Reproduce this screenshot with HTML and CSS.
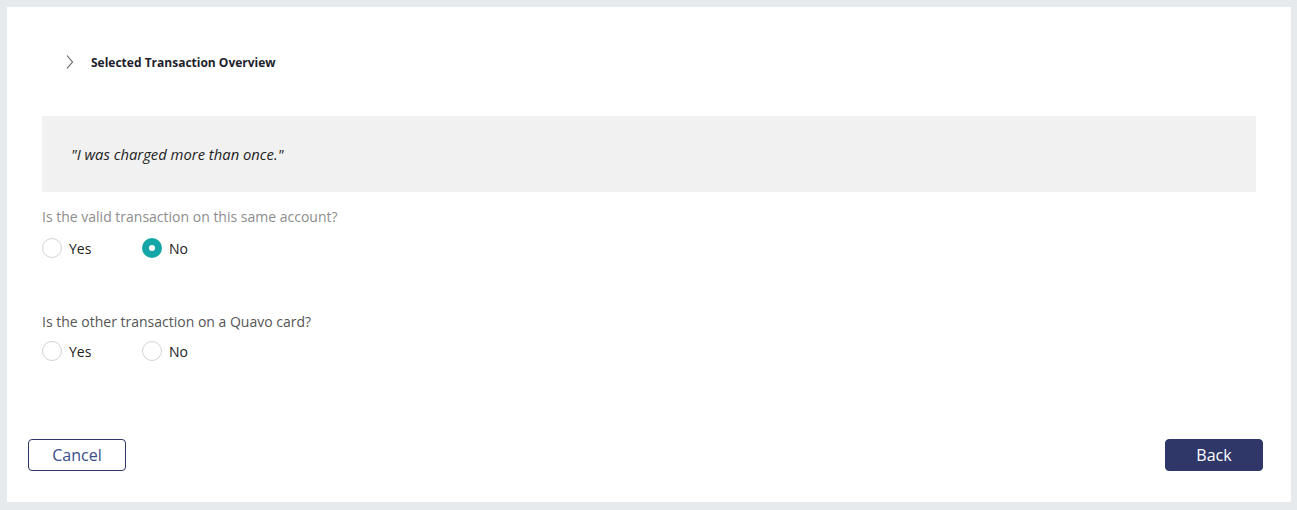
FILE: index.html
```html
<!DOCTYPE html>
<html>
<head>
<meta charset="utf-8">
<link rel="stylesheet" href="styles.css">
</head>
<body>
<div class="card">
  <div class="header">
    <svg class="chev" width="8" height="14" viewBox="0 0 8 14"><path d="M1 0.5 L6.5 7 L1 13.5" fill="none" stroke="#5a5a5a" stroke-width="1.1"/></svg>
    <span class="title">Selected Transaction Overview</span>
  </div>
  <div class="content">
    <div class="quote">"I was charged more than once."</div>
    <div class="q q-light">Is the valid transaction on this same account?</div>
    <div class="radios">
      <label class="opt"><span class="radio"></span>Yes</label>
      <label class="opt"><span class="radio checked"></span>No</label>
    </div>
    <div class="q q-dark">Is the other transaction on a Quavo card?</div>
    <div class="radios radios-2">
      <label class="opt"><span class="radio"></span>Yes</label>
      <label class="opt"><span class="radio"></span>No</label>
    </div>
  </div>
  <div class="actions">
    <button class="btn btn-outline">Cancel</button>
    <button class="btn btn-primary">Back</button>
  </div>
</div>
</body>
</html>
```
FILE: styles.css
```css
html, body {
  margin: 0;
  padding: 0;
}
body {
  background: #e6eaec;
  padding: 7px 6px 9px 7px;
  font-family: "Open Sans", "Liberation Sans", sans-serif;
  color: #333;
}
.card {
  background: #fff;
  height: 495px;
  box-sizing: border-box;
  padding-top: 45px;
  display: flex;
  flex-direction: column;
}
.header {
  display: flex;
  align-items: center;
  height: 20px;
  padding-left: 59px;
}
.chev {
  display: block;
}
.title {
  margin-left: 17px;
  font-size: 12px;
  font-weight: 700;
  color: #1d1d2b;
}
.content {
  padding: 0 35px;
  margin-top: 44px;
}
.quote {
  background: #f1f1f1;
  height: 76px;
  box-sizing: border-box;
  padding-left: 29px;
  display: flex;
  align-items: center;
  font-style: italic;
  font-size: 14.8px;
  color: #222;
}
.q {
  font-size: 14px;
  line-height: 20px;
}
.q-light {
  margin-top: 15px;
  color: #8d8d8d;
}
.q-dark {
  margin-top: 53px;
  color: #555;
}
.radios {
  display: flex;
  margin-top: 10px;
  height: 22px;
  align-items: center;
}
.radios-2 {
  margin-top: 8px;
}
.opt {
  display: flex;
  align-items: center;
  width: 100px;
  font-size: 14px;
  color: #222;
}
.radio {
  width: 20px;
  height: 20px;
  box-sizing: border-box;
  border: 1px solid #cfd3d8;
  border-radius: 50%;
  margin-right: 7px;
  background: #fff;
}
.radio.checked {
  border: 7px solid #14a6a6;
  background: #fff;
}
.actions {
  margin-top: 77px;
  display: flex;
  justify-content: space-between;
  padding: 0 28px 0 21px;
}
.btn {
  width: 98px;
  height: 32px;
  border-radius: 4px;
  font-family: "Open Sans", "Liberation Sans", sans-serif;
  font-size: 16px;
  cursor: pointer;
}
.btn-outline {
  background: #fff;
  border: 1px solid #2e3767;
  color: #3a4a8a;
}
.btn-primary {
  background: #2e3767;
  border: 1px solid #2e3767;
  color: #fff;
}
```
